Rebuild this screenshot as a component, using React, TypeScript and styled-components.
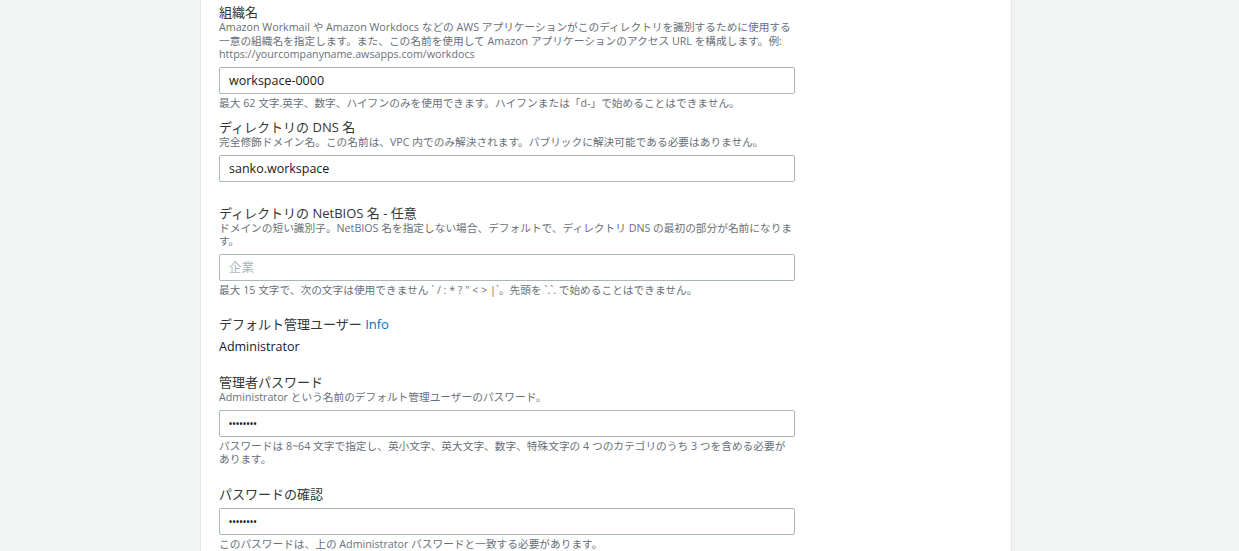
import React from "react";
import styled, { createGlobalStyle } from "styled-components";

const GlobalStyle = createGlobalStyle`
  html, body {
    margin: 0;
    padding: 0;
    background: #f2f3f3;
    font-family: "Open Sans", "Noto Sans CJK JP", sans-serif;
  }
`;

const Page = styled.div`
  display: flex;
  min-height: 100vh;
`;

const Panel = styled.main`
  margin-left: 200px;
  width: 812px;
  box-sizing: border-box;
  background: #ffffff;
  border-left: 1px solid #e4e7e7;
  border-right: 1px solid #e4e7e7;
  padding: 3px 0 0 18px;
  overflow: hidden;
`;

const Form = styled.div`
  width: 576px;
  display: flex;
  flex-direction: column;
`;

const Field = styled.div<{ $gap: number }>`
  display: flex;
  flex-direction: column;
  margin-top: ${(p) => p.$gap}px;
`;

const Label = styled.label`
  font-size: 13px;
  line-height: 18px;
  color: #333638;
`;

const InfoLink = styled.a`
  color: #0073bb;
  text-decoration: none;
  cursor: pointer;
`;

const Help = styled.div`
  font-size: 10.7px;
  line-height: 13.5px;
  color: #687078;
  white-space: nowrap;
`;

const Constraint = styled(Help)`
  margin-top: 3px;
`;

const TextInput = styled.input<{ $secret?: boolean }>`
  margin-top: 5px;
  height: 27px;
  width: 100%;
  box-sizing: border-box;
  border: 1px solid #aab7b8;
  border-radius: 2px;
  padding: 0 9px;
  font-family: "Open Sans", "Noto Sans CJK JP", sans-serif;
  font-size: ${(p) => (p.$secret ? "8px" : "12.5px")};
  font-weight: ${(p) => (p.$secret ? 700 : 400)};
  letter-spacing: ${(p) => (p.$secret ? "0.5px" : "0")};
  color: #16191f;
  background: #ffffff;
  outline: none;

  &::placeholder {
    color: #aab7b8;
  }
`;

const Value = styled.div`
  margin-top: 5px;
  font-size: 12.5px;
  line-height: 18px;
  color: #16191f;
`;

export default function App() {
  return (
    <>
      <GlobalStyle />
      <Page>
        <Panel>
          <Form>
            <Field $gap={0}>
              <Label>組織名</Label>
              <Help>
                Amazon Workmail や Amazon Workdocs などの AWS アプリケーションがこのディレクトリを識別するために使用する
                <br />
                一意の組織名を指定します。また、この名前を使用して Amazon アプリケーションのアクセス URL を構成します。例:
                <br />
                https://yourcompanyname.awsapps.com/workdocs
              </Help>
              <TextInput type="text" defaultValue="workspace-0000" readOnly />
              <Constraint>
                最大 62 文字.英字、数字、ハイフンのみを使用できます。ハイフンまたは「d-」で始めることはできません。
              </Constraint>
            </Field>

            <Field $gap={8}>
              <Label>ディレクトリの DNS 名</Label>
              <Help>
                完全修飾ドメイン名。この名前は、VPC 内でのみ解決されます。パブリックに解決可能である必要はありません。
              </Help>
              <TextInput type="text" defaultValue="sanko.workspace" readOnly />
            </Field>

            <Field $gap={22}>
              <Label>ディレクトリの NetBIOS 名 - 任意</Label>
              <Help>
                ドメインの短い識別子。NetBIOS 名を指定しない場合、デフォルトで、ディレクトリ DNS の最初の部分が名前になりま
                <br />
                す。
              </Help>
              <TextInput type="text" placeholder="企業" readOnly />
              <Constraint>
                最大 15 文字で、次の文字は使用できません ` / : * ? " &lt; &gt; |`。先頭を `.`. で始めることはできません。
              </Constraint>
            </Field>

            <Field $gap={18}>
              <Label>
                デフォルト管理ユーザー <InfoLink>Info</InfoLink>
              </Label>
              <Value>Administrator</Value>
            </Field>

            <Field $gap={17}>
              <Label>管理者パスワード</Label>
              <Help>Administrator という名前のデフォルト管理ユーザーのパスワード。</Help>
              <TextInput type="password" $secret defaultValue="password" readOnly />
              <Constraint>
                パスワードは 8~64 文字で指定し、英小文字、英大文字、数字、特殊文字の 4 つのカテゴリのうち 3 つを含める必要が
                <br />
                あります。
              </Constraint>
            </Field>

            <Field $gap={18}>
              <Label>パスワードの確認</Label>
              <TextInput type="password" $secret defaultValue="password" readOnly />
              <Constraint>このパスワードは、上の Administrator パスワードと一致する必要があります。</Constraint>
            </Field>
          </Form>
        </Panel>
      </Page>
    </>
  );
}
